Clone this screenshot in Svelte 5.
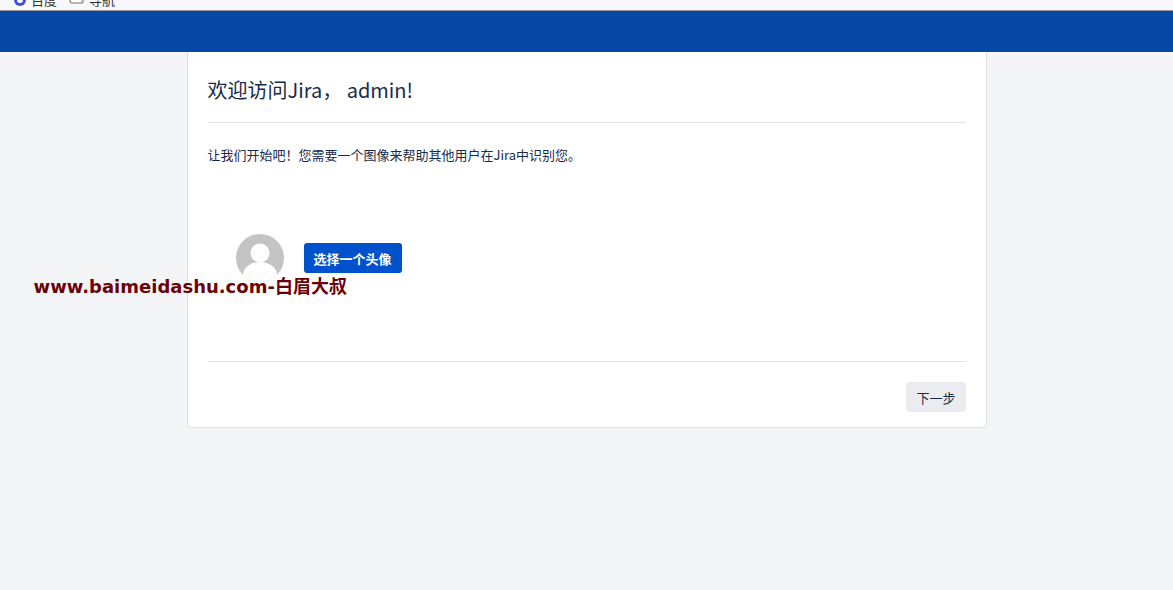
<script>
	let step = $state(1);
</script>

<div class="bookmarks">
	<div class="bookmark-row">
		<svg class="paw" width="14" height="14" viewBox="0 0 14 14">
			<circle cx="7" cy="7" r="6" fill="#3b4fe0" />
			<circle cx="7" cy="7" r="3" fill="#fff" />
		</svg>
		<span>百度</span>
		<svg class="doc" width="16" height="14" viewBox="0 0 16 14">
			<rect x="1" y="1" width="13" height="9" rx="2" fill="#fff" stroke="#777" stroke-width="1.2" />
		</svg>
		<span>导航</span>
	</div>
</div>
<header class="topnav"></header>

<main class="page">
	<section class="card">
		<h1>欢迎访问Jira， admin!</h1>
		<p class="intro">让我们开始吧！您需要一个图像来帮助其他用户在Jira中识别您。</p>
		<div class="avatar-row">
			<svg class="avatar" width="48" height="48" viewBox="0 0 48 48">
				<defs>
					<clipPath id="round"><circle cx="24" cy="24" r="24" /></clipPath>
				</defs>
				<g clip-path="url(#round)">
					<rect width="48" height="48" fill="#c4c4c4" />
					<circle cx="24" cy="19" r="9.5" fill="#fff" />
					<ellipse cx="24" cy="41" rx="17" ry="13" fill="#fff" />
				</g>
			</svg>
			<button class="primary">选择一个头像</button>
		</div>
		<div class="watermark">www.baimeidashu.com-白眉大叔</div>
		<footer class="card-footer">
			<button class="secondary" onclick={() => (step += 1)}>下一步</button>
		</footer>
	</section>
</main>

<style>
	:global(body) {
		background: #f4f5f7;
		font-family: "Noto Sans CJK SC", "Liberation Sans", sans-serif;
	}

	.bookmarks {
		height: 10px;
		background: #f8f8fa;
		border-bottom: 1px solid #9a9a9e;
		overflow: hidden;
	}

	.bookmark-row {
		display: flex;
		align-items: center;
		gap: 4px;
		height: 14px;
		margin-top: -7px;
		padding-left: 13px;
		font-size: 13px;
		line-height: 14px;
		color: #333;
	}

	.doc {
		margin-left: 8px;
	}

	.topnav {
		height: 41px;
		background: #0747a6;
	}

	.page {
		width: 800px;
		margin: 0 auto;
		padding-bottom: 162px;
	}

	.card {
		position: relative;
		height: 376px;
		box-sizing: border-box;
		padding: 0 20px;
		background: #fff;
		border: 1px solid #dfe1e6;
		border-top: none;
		border-radius: 0 0 4px 4px;
		color: #172b4d;
	}

	h1 {
		margin: 0;
		height: 71px;
		box-sizing: border-box;
		padding-top: 23px;
		font-size: 20px;
		line-height: 30px;
		font-weight: 400;
		border-bottom: 1px solid #dfe1e6;
		font-family: "Noto Sans CJK SC", sans-serif;
	}

	.intro {
		margin: 22px 0 0;
		font-size: 13px;
		line-height: 20px;
	}

	.avatar-row {
		display: flex;
		align-items: center;
		gap: 20px;
		margin-top: 69px;
		padding-left: 28px;
	}

	button {
		border: none;
		border-radius: 3px;
		height: 30px;
		padding: 0 10px;
		font-family: inherit;
		font-size: 13px;
		cursor: pointer;
	}

	.primary {
		background: #0052cc;
		color: #fff;
		font-weight: 700;
	}

	.watermark {
		position: absolute;
		left: -154px;
		top: 223px;
		font-family: "DejaVu Sans", "Noto Sans CJK SC", sans-serif;
		font-size: 18px;
		line-height: 24px;
		font-weight: 700;
		color: #6b0006;
		white-space: nowrap;
	}

	.card-footer {
		display: flex;
		justify-content: flex-end;
		margin-top: 79px;
		padding-top: 20px;
		border-top: 1px solid #dfe1e6;
	}

	.secondary {
		background: #ebecf0;
		color: #172b4d;
	}
</style>
